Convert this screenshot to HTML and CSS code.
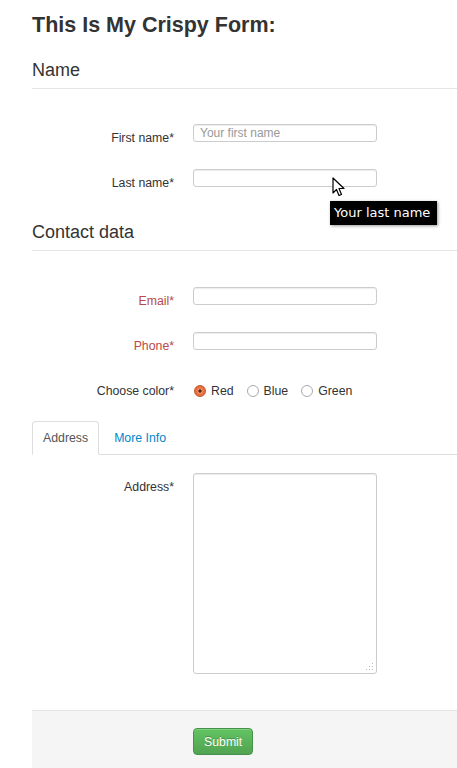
FILE: index.html
```html
<!DOCTYPE html>
<html lang="en">
<head>
    <meta charset="UTF-8">
    <meta name="viewport" content="width=device-width, initial-scale=1.0">
    <title>Crispy Form</title>
    <link rel="stylesheet" href="styles.css">
</head>
<body>
<div class="container">
    <h2 class="title">This Is My Crispy Form:</h2>
    <form class="form-horizontal">
        <div class="fieldset">
            <div class="legend">Name</div>
            <div class="control-group">
                <label class="control-label">First name*</label>
                <div class="controls">
                    <input type="text" placeholder="Your first name">
                </div>
            </div>
            <div class="control-group">
                <label class="control-label">Last name*</label>
                <div class="controls has-tip">
                    <input type="text">
                    <svg class="cursor" width="14" height="21" viewBox="0 0 14 21">
                        <path d="M1 1 L1 16 L4.5 12.5 L7 18.5 L9.5 17.5 L7 11.5 L12 11.5 Z" fill="#fff" stroke="#000" stroke-width="1.2" stroke-linejoin="round"/>
                    </svg>
                    <div class="tooltip">Your last name</div>
                </div>
            </div>
        </div>
        <div class="fieldset">
            <div class="legend">Contact data</div>
            <div class="control-group error">
                <label class="control-label">Email*</label>
                <div class="controls">
                    <input type="text">
                </div>
            </div>
            <div class="control-group error">
                <label class="control-label">Phone*</label>
                <div class="controls">
                    <input type="text">
                </div>
            </div>
            <div class="control-group">
                <label class="control-label">Choose color*</label>
                <div class="controls radios">
                    <label class="radio"><input type="radio" name="color" checked> Red</label>
                    <label class="radio"><input type="radio" name="color"> Blue</label>
                    <label class="radio"><input type="radio" name="color"> Green</label>
                </div>
            </div>
        </div>
        <ul class="nav-tabs">
            <li class="active"><a href="#">Address</a></li>
            <li><a href="#">More Info</a></li>
        </ul>
        <div class="tab-pane">
            <div class="control-group">
                <label class="control-label">Address*</label>
                <div class="controls">
                    <textarea></textarea>
                </div>
            </div>
        </div>
        <div class="form-actions">
            <button type="button" class="btn-success">Submit</button>
        </div>
    </form>
</div>
</body>
</html>
```

FILE: styles.css
```css
body {
    margin: 0;
    font-family: 'Liberation Sans', Arial, sans-serif;
    font-size: 12.3px;
    color: #333;
    background: #fff;
}

.container {
    padding-left: 32px;
}

.title {
    margin: 10px 0 0;
    font-size: 21.5px;
    line-height: 30px;
    font-weight: bold;
}

.legend {
    margin: 12px 0 35px;
    font-size: 18px;
    line-height: 36px;
    border-bottom: 1px solid #e5e5e5;
}

.fieldset + .fieldset .legend {
    margin: 5px 0 36px;
}

.control-group {
    display: flex;
    margin-bottom: 23px;
}

.control-label {
    width: 142px;
    flex: 0 0 142px;
    text-align: right;
    padding-top: 6px;
    line-height: 16px;
}

.controls {
    margin-left: 19px;
}

.has-tip {
    position: relative;
}

.control-group.error .control-label {
    color: #b94a48;
}

input[type="text"], textarea {
    box-sizing: border-box;
    width: 184px;
    height: 18px;
    margin: 0;
    padding: 0 6px;
    font-family: 'Liberation Sans', Arial, sans-serif;
    font-size: 12px;
    color: #555;
    border: 1px solid #ccc;
    border-radius: 3px;
    box-shadow: inset 0 1px 1px rgba(0, 0, 0, 0.075);
}

input::placeholder {
    color: #999;
}

textarea {
    display: block;
    height: 201px;
    resize: none;
    background:
        radial-gradient(circle, #bbb 0.7px, transparent 0.8px) right 2px bottom 2px / 3px 3px no-repeat,
        radial-gradient(circle, #bbb 0.7px, transparent 0.8px) right 5px bottom 2px / 3px 3px no-repeat,
        radial-gradient(circle, #bbb 0.7px, transparent 0.8px) right 2px bottom 5px / 3px 3px no-repeat,
        radial-gradient(circle, #bbb 0.7px, transparent 0.8px) right 8px bottom 2px / 3px 3px no-repeat,
        radial-gradient(circle, #bbb 0.7px, transparent 0.8px) right 5px bottom 5px / 3px 3px no-repeat,
        radial-gradient(circle, #bbb 0.7px, transparent 0.8px) right 2px bottom 8px / 3px 3px no-repeat,
        #fff;
}

.radios {
    display: flex;
    gap: 12px;
    padding-top: 6px;
}

.radio {
    display: flex;
    align-items: center;
    gap: 5px;
    line-height: 16px;
}

.radio input {
    appearance: none;
    -webkit-appearance: none;
    width: 12px;
    height: 12px;
    margin: 0 0 0 1px;
    border: 1px solid #a9a9a9;
    border-radius: 50%;
    background: #fff;
    box-sizing: border-box;
}

.radio input:checked {
    border-color: #c25a2c;
    background: radial-gradient(circle, #5a2a14 0, #5a2a14 1.4px, #f6a37d 1.9px, #ec7447 3px, #e4632f 6px);
}

.tooltip {
    position: absolute;
    left: 137px;
    top: 32px;
    width: 107px;
    height: 24px;
    box-sizing: border-box;
    padding-left: 4px;
    background: #000;
    color: #fff;
    font-family: 'DejaVu Sans', sans-serif;
    font-size: 13px;
    line-height: 24px;
    white-space: nowrap;
    box-shadow: 1px 1px 3px rgba(0, 0, 0, 0.4);
}

.cursor {
    position: absolute;
    left: 139px;
    top: 8px;
}

.nav-tabs {
    display: flex;
    list-style: none;
    margin: -1px 0 18px;
    padding: 0;
    border-bottom: 1px solid #ddd;
}

.nav-tabs li {
    margin-bottom: -1px;
}

.nav-tabs a {
    display: block;
    padding: 0 10px;
    line-height: 32px;
    color: #0088cc;
    text-decoration: none;
    border: 1px solid transparent;
    border-radius: 4px 4px 0 0;
    margin-right: 4px;
}

.nav-tabs .active a {
    color: #555;
    background: #fff;
    border-color: #ddd #ddd transparent;
}

.tab-pane .control-group {
    margin-bottom: 0;
}

.form-actions {
    margin-top: 36px;
    padding: 17px 0 13px 161px;
    height: 27px;
    background: #f5f5f5;
    border-top: 1px solid #e5e5e5;
}

.btn-success {
    height: 27px;
    padding: 0 10px;
    font-family: 'Liberation Sans', Arial, sans-serif;
    font-size: 12.3px;
    color: #fff;
    text-shadow: 0 -1px 0 rgba(0, 0, 0, 0.25);
    background: linear-gradient(to bottom, #62c462, #51a351);
    border: 1px solid #47924a;
    border-radius: 4px;
    box-shadow: inset 0 1px 0 rgba(255, 255, 255, 0.2);
}
```
